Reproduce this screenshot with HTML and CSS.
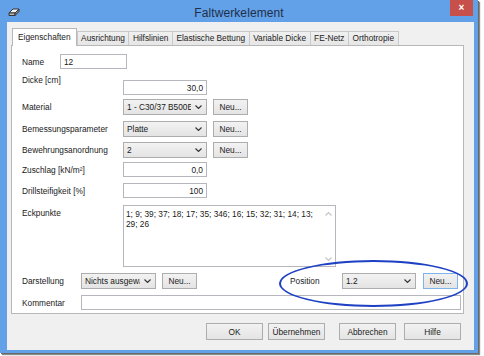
FILE: index.html
```html
<!DOCTYPE html>
<html lang="de">
<head>
<meta charset="utf-8">
<title>Faltwerkelement</title>
<link rel="stylesheet" href="styles.css">
</head>
<body>
<div class="window">
  <div class="titlebar">
    <div class="app-icon">
      <svg width="12" height="10" viewBox="0 0 12 10">
        <path d="M1 6 L5 2 L11 2 L7 6 Z" fill="#f4f4f4" stroke="#333" stroke-width="1"/>
        <path d="M1 6 L7 6 L7 8.5 L1 8.5 Z" fill="#bbb" stroke="#333" stroke-width="1"/>
        <path d="M7 6 L11 2 L11 4.5 L7 8.5 Z" fill="#888" stroke="#333" stroke-width="1"/>
      </svg>
    </div>
    <div class="title">Faltwerkelement</div>
    <div class="close">×</div>
  </div>
  <div class="client">
    <div class="tabs">
      <div class="tab active">Eigenschaften</div>
      <div class="tab">Ausrichtung</div>
      <div class="tab">Hilfslinien</div>
      <div class="tab">Elastische Bettung</div>
      <div class="tab">Variable Dicke</div>
      <div class="tab">FE-Netz</div>
      <div class="tab">Orthotropie</div>
    </div>
    <div class="panel">
      <div class="row r-name">
        <div class="lbl l-short">Name</div>
        <div class="field f-name">12</div>
      </div>
      <div class="row r-dicke top">
        <div class="lbl l-long up">Dicke [cm]</div>
        <div class="field f-num num">30,0</div>
      </div>
      <div class="row r-mat">
        <div class="lbl l-long">Material</div>
        <div class="combo c-main"><span class="ctext">1 - C30/37 B500E</span><span class="chev"><svg width="7" height="4" viewBox="0 0 7 4"><path d="M0.5 0.5 L3.5 3.5 L6.5 0.5" fill="none" stroke="#333" stroke-width="1.1"/></svg></span></div>
        <div class="btn b-neu">Neu...</div>
      </div>
      <div class="row r-bem">
        <div class="lbl l-long">Bemessungsparameter</div>
        <div class="combo c-main"><span class="ctext">Platte</span><span class="chev"><svg width="7" height="4" viewBox="0 0 7 4"><path d="M0.5 0.5 L3.5 3.5 L6.5 0.5" fill="none" stroke="#333" stroke-width="1.1"/></svg></span></div>
        <div class="btn b-neu">Neu...</div>
      </div>
      <div class="row r-bew">
        <div class="lbl l-long">Bewehrungsanordnung</div>
        <div class="combo c-main"><span class="ctext">2</span><span class="chev"><svg width="7" height="4" viewBox="0 0 7 4"><path d="M0.5 0.5 L3.5 3.5 L6.5 0.5" fill="none" stroke="#333" stroke-width="1.1"/></svg></span></div>
        <div class="btn b-neu">Neu...</div>
      </div>
      <div class="row r-zus">
        <div class="lbl l-long">Zuschlag [kN/m²]</div>
        <div class="field f-num num">0,0</div>
      </div>
      <div class="row r-dri">
        <div class="lbl l-long">Drillsteifigkeit [%]</div>
        <div class="field f-num num">100</div>
      </div>
      <div class="row r-eck top">
        <div class="lbl l-long eck-lbl">Eckpunkte</div>
        <div class="textarea">
          <div class="ta-text">1; 9; 39; 37; 18; 17; 35; 346; 16; 15; 32; 31; 14; 13;<br>29; 26</div>
          <div class="ta-scroll">
            <svg width="7" height="4" viewBox="0 0 7 4"><path d="M0.5 3.5 L3.5 0.5 L6.5 3.5" fill="none" stroke="#c4c4c4" stroke-width="1.1"/></svg>
            <svg width="7" height="4" viewBox="0 0 7 4"><path d="M0.5 0.5 L3.5 3.5 L6.5 0.5" fill="none" stroke="#c4c4c4" stroke-width="1.1"/></svg>
          </div>
        </div>
      </div>
      <div class="row r-dar">
        <div class="lbl l-mid">Darstellung</div>
        <div class="combo c-dar"><span class="ctext">Nichts ausgewählt</span><span class="chev"><svg width="7" height="4" viewBox="0 0 7 4"><path d="M0.5 0.5 L3.5 3.5 L6.5 0.5" fill="none" stroke="#333" stroke-width="1.1"/></svg></span></div>
        <div class="btn b-neu">Neu...</div>
        <div class="pos-group">
          <div class="lbl l-pos">Position</div>
          <div class="combo c-pos"><span class="ctext">1.2</span><span class="chev"><svg width="7" height="4" viewBox="0 0 7 4"><path d="M0.5 0.5 L3.5 3.5 L6.5 0.5" fill="none" stroke="#333" stroke-width="1.1"/></svg></span></div>
          <div class="btn b-neu focus">Neu...</div>
        </div>
      </div>
      <div class="row r-kom">
        <div class="lbl l-mid">Kommentar</div>
        <div class="field f-kom"></div>
      </div>
    </div>
    <div class="buttons">
      <div class="btn dlg">OK</div>
      <div class="btn dlg b-ueb">Übernehmen</div>
      <div class="btn dlg b-abb">Abbrechen</div>
      <div class="btn dlg b-hil">Hilfe</div>
    </div>
  </div>
</div>
<div class="annotation"></div>
</body>
</html>
```

FILE: styles.css
```css
html, body {
  margin: 0;
  padding: 0;
  background: #ffffff;
}
body {
  width: 484px;
  height: 356px;
  position: relative;
  overflow: hidden;
  font-family: "Liberation Sans", Arial, sans-serif;
  font-size: 8.3px;
  color: #1a1a1a;
}
.window {
  width: 478px;
  height: 353px;
  background: #62a0e7;
  box-shadow: 1px 1px 0 #6a6a6a, 2px 2px 1px #8a8a8a;
  display: flex;
  flex-direction: column;
}
.titlebar {
  height: 22px;
  display: grid;
  grid-template-columns: 1fr auto 1fr;
  align-items: start;
}
.app-icon {
  margin: 7px 0 0 8px;
  height: 10px;
  line-height: 0;
}
.title {
  font-size: 12px;
  line-height: 14px;
  margin-top: 6px;
  color: #1f2f49;
  letter-spacing: 0.1px;
}
.close {
  justify-self: end;
  margin-right: 5px;
  width: 23px;
  height: 16px;
  background: #c7504a;
  color: #ffffff;
  font-size: 10px;
  line-height: 15px;
  text-align: center;
  font-weight: bold;
}
.client {
  margin: 0 4px 3px 7px;
  height: 328px;
  background: #f0f0f0;
  display: flex;
  flex-direction: column;
}
.tabs {
  display: flex;
  align-items: flex-end;
  margin: 6px 0 0 5px;
  height: 17px;
  position: relative;
  z-index: 1;
}
.tab {
  height: 14px;
  line-height: 13px;
  padding: 0 3.5px;
  border: 1px solid #c9c9c9;
  border-bottom: none;
  margin-left: -1px;
  background: linear-gradient(#f0f0f0, #e6e6e6);
  box-sizing: border-box;
  color: #222;
}
.tab.active {
  height: 18px;
  margin-bottom: -1px;
  padding: 2px 5px 0 5px;
  background: #ffffff;
  margin-left: 0;
  margin-right: 1px;
  border-color: #b8b8b8;
}
.panel {
  margin-left: 4px;
  width: 453px;
  height: 269px;
  box-sizing: border-box;
  border: 1px solid #b8b8b8;
  background: #ffffff;
  padding: 8px 0 0 10px;
  display: flex;
  flex-direction: column;
}
.row {
  display: flex;
  align-items: center;
}
.row.top {
  align-items: flex-start;
}
.lbl {
  white-space: nowrap;
  line-height: 10px;
}
.l-short { width: 38px; }
.l-long { width: 101px; }
.l-mid { width: 59px; }
.up { margin-top: -5px; }
.eck-lbl { margin-top: 3px; }
.field {
  height: 15px;
  box-sizing: border-box;
  border: 1px solid #b5b7bd;
  background: #ffffff;
  padding: 0 3px;
  display: flex;
  align-items: center;
  white-space: nowrap;
}
.num { justify-content: flex-end; }
.f-name { width: 67px; }
.f-num { width: 84px; }
.f-kom { width: 380px; }
.combo {
  height: 16px;
  box-sizing: border-box;
  border: 1px solid #adadad;
  background: linear-gradient(#f2f2f2, #e4e4e4);
  display: flex;
  align-items: center;
  padding-left: 3px;
}
.ctext {
  flex: 1;
  overflow: hidden;
  white-space: nowrap;
}
.chev {
  width: 15px;
  display: flex;
  justify-content: center;
  align-items: center;
  line-height: 0;
}
.c-main { width: 84px; }
.c-dar { width: 75px; }
.c-pos { width: 74px; }
.btn {
  height: 16px;
  box-sizing: border-box;
  border: 1px solid #adadad;
  background: linear-gradient(#f2f2f2, #e4e4e4);
  display: flex;
  align-items: center;
  justify-content: center;
  white-space: nowrap;
  color: #222;
}
.b-neu {
  width: 35px;
  margin-left: 6px;
}
.b-neu.focus {
  border-color: #7eb4ea;
  margin-left: 7px;
}
.r-name { margin-top: 0; }
.r-dicke { margin-top: 11px; }
.r-mat { margin-top: 4px; }
.r-bem { margin-top: 6px; }
.r-bew { margin-top: 5px; }
.r-zus { margin-top: 4px; }
.r-dri { margin-top: 6px; }
.r-eck { margin-top: 7px; }
.r-dar { margin-top: 6px; }
.r-kom { margin-top: 6px; }
.textarea {
  width: 213px;
  height: 62px;
  box-sizing: border-box;
  border: 1px solid #b5b7bd;
  background: #ffffff;
  display: flex;
}
.ta-text {
  flex: 1;
  padding: 3px 0 0 2px;
  line-height: 10px;
  white-space: nowrap;
  overflow: hidden;
}
.ta-scroll {
  width: 13px;
  display: flex;
  flex-direction: column;
  justify-content: space-between;
  align-items: center;
  padding: 6px 0 5px;
  box-sizing: border-box;
  line-height: 0;
}
.pos-group {
  margin-left: auto;
  margin-right: 5px;
  display: flex;
  align-items: center;
}
.l-pos { width: 52px; }
.buttons {
  display: flex;
  justify-content: flex-end;
  margin-top: 9px;
  padding-right: 13px;
}
.btn.dlg {
  width: 57px;
  height: 17px;
}
.b-ueb { margin-left: 5px; }
.b-abb { margin-left: 14px; }
.b-hil { margin-left: 8px; }
.annotation {
  position: absolute;
  left: 279px;
  top: 260px;
  width: 189px;
  height: 47px;
  box-sizing: border-box;
  border: 2px solid #1e40c2;
  border-radius: 50%;
}
```
